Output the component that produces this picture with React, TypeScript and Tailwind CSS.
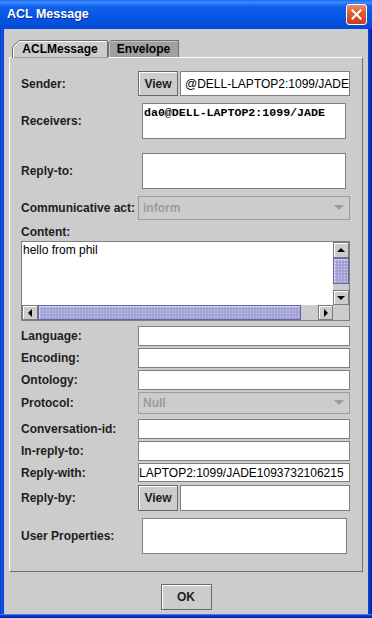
import React from "react";

function Label({ children }: { children: React.ReactNode }) {
  return (
    <div className="w-[117px] shrink-0 text-[12px] leading-[14px] font-bold text-[#1e1e1e] whitespace-nowrap">
      {children}
    </div>
  );
}

function Field({ value = "", className = "" }: { value?: string; className?: string }) {
  return (
    <div
      className={`h-full bg-white border border-[#7f7f7f] text-[12px] leading-[14px] text-black overflow-hidden whitespace-nowrap flex items-center ${className}`}
    >
      {value}
    </div>
  );
}

function ViewButton() {
  return (
    <div className="w-[40px] shrink-0 h-full border border-[#6a6a6a] bg-[#cccccc] shadow-[inset_1px_1px_0_#ffffff] flex items-center justify-center text-[12px] font-bold text-[#1e1e1e]">
      View
    </div>
  );
}

function Combo({ value }: { value: string }) {
  return (
    <div className="w-[212px] h-full border border-[#9c9c9c] bg-[#cccccc] flex items-center justify-between pl-[4px] pr-[5px]">
      <span className="text-[12px] font-bold text-[#9c9c9c]">{value}</span>
      <svg width="10" height="6" viewBox="0 0 10 6">
        <path d="M0 0 L10 0 L5 5 Z" fill="#9c9c9c" />
      </svg>
    </div>
  );
}

function Arrow({ dir }: { dir: "up" | "down" | "left" | "right" }) {
  const d = {
    up: "M4 0 L8 4 L0 4 Z",
    down: "M0 0 L8 0 L4 4 Z",
    left: "M0 4 L4 0 L4 8 Z",
    right: "M0 0 L4 4 L0 8 Z",
  }[dir];
  const vert = dir === "up" || dir === "down";
  return (
    <div className="w-full h-full bg-[#cccccc] border border-[#7a7a7a] shadow-[inset_1px_1px_0_#ffffff] flex items-center justify-center">
      <svg width={vert ? 8 : 4} height={vert ? 4 : 8} viewBox={vert ? "0 0 8 4" : "0 0 4 8"}>
        <path d={d} fill="#000000" />
      </svg>
    </div>
  );
}

const thumb =
  "bg-[#a2a2d4] bg-[radial-gradient(circle,#d6d6ff_0.7px,transparent_0.9px)] bg-[length:3px_3px] border border-[#66669a] shadow-[inset_1px_1px_0_#ccccff]";

export default function App() {
  return (
    <div className="w-[372px] h-[618px] flex flex-col font-['Liberation_Sans',Arial,sans-serif] bg-[#0838c8] overflow-hidden">
      {/* title bar */}
      <div className="h-[29px] shrink-0 flex items-center justify-between pl-[7px] pr-[5px] bg-[linear-gradient(to_bottom,#1a66f0_0%,#3d8cff_8%,#0f60ec_22%,#0556e6_60%,#0549d4_100%)]">
        <span className="text-[12.5px] font-bold text-white [text-shadow:1px_1px_0_#0a2c90]">ACL Message</span>
        <div className="w-[21px] h-[21px] rounded-[3px] border border-white bg-[linear-gradient(to_bottom,#ea8a6a,#dc5a34_45%,#c8401c)] flex items-center justify-center">
          <svg width="11" height="11" viewBox="0 0 11 11">
            <path d="M1.5 1.5 L9.5 9.5 M9.5 1.5 L1.5 9.5" stroke="#ffffff" strokeWidth="2" strokeLinecap="square" />
          </svg>
        </div>
      </div>

      <div className="flex flex-1 min-h-0">
        <div className="w-[4px] shrink-0 bg-[linear-gradient(to_right,#0020b0,#1a5cf0,#0a48e0,#0838c8)]" />

        {/* client area */}
        <div className="w-[364px] bg-[#cccccc] flex flex-col px-[5px]">
          {/* tabs */}
          <div className="pt-[11px] flex pl-[3px] relative z-10">
            <div className="relative w-[96px] h-[18px] -mb-[1px]">
              <svg className="absolute inset-0" width="96" height="18" viewBox="0 0 96 18">
                <path d="M0.5 18 L0.5 7 L7 0.5 L95.5 0.5 L95.5 18 Z" fill="#cccccc" stroke="#6f6f6f" />
                <path d="M1.5 18 L1.5 7.4 L7.4 1.5 L94.5 1.5" fill="none" stroke="#ffffff" />
              </svg>
              <div className="relative h-[17px] flex items-center justify-center text-[12px] font-bold text-black">
                ACLMessage
              </div>
            </div>
            <div className="relative w-[71px] h-[17px]">
              <svg className="absolute inset-0" width="71" height="17" viewBox="0 0 71 17">
                <path d="M0.5 17 L0.5 3 L3 0.5 L70.5 0.5 L70.5 17" fill="#a0a0a0" stroke="#6f6f6f" />
                <path d="M1.5 17 L1.5 3.4 L3.4 1.5 L69.5 1.5" fill="none" stroke="#c4c4c4" />
              </svg>
              <div className="relative h-[17px] flex items-center justify-center text-[12px] font-bold text-black">
                Envelope
              </div>
            </div>
          </div>

          {/* tab panel */}
          <div className="w-[354px] border border-t-white border-l-white border-r-[#6f6f6f] border-b-[#6f6f6f] pt-[13px] pb-[17px] pl-[11px] pr-[12px] flex flex-col">
            <div className="flex items-center h-[25px]">
              <Label>Sender:</Label>
              <div className="flex h-full gap-[2px] w-[212px]">
                <ViewButton />
                <Field value="@DELL-LAPTOP2:1099/JADE" className="w-[170px] pl-[4px]" />
              </div>
            </div>

            <div className="flex items-center h-[36px] mt-[7px]">
              <Label>Receivers:</Label>
              <div className="ml-[4px] w-[204px] h-full bg-white border border-[#7f7f7f] pt-[2px] pl-[1px] font-['Liberation_Mono',monospace] font-bold text-[11.6px] leading-[14px] text-black whitespace-nowrap overflow-hidden">
                da0@DELL-LAPTOP2:1099/JADE
              </div>
            </div>

            <div className="flex items-center h-[36px] mt-[14px]">
              <Label>Reply-to:</Label>
              <div className="ml-[4px] w-[204px] h-full bg-white border border-[#7f7f7f]" />
            </div>

            <div className="flex items-center h-[24px] mt-[7px]">
              <Label>Communicative act:</Label>
              <Combo value="inform" />
            </div>

            <div className="h-[14px] mt-[5px]">
              <Label>Content:</Label>
            </div>

            <div className="mt-[2px] w-[329px] h-[80px] border border-[#7f7f7f] bg-white grid grid-cols-[1fr_16px] grid-rows-[1fr_15px]">
              <div className="pl-[1px] pt-[1px] text-[12px] leading-[14px] text-black">hello from phil</div>
              <div className="flex flex-col bg-[#cccccc]">
                <div className="h-[16px]"><Arrow dir="up" /></div>
                <div className={`h-[26px] ${thumb}`} />
                <div className="flex-1" />
                <div className="h-[15px]"><Arrow dir="down" /></div>
              </div>
              <div className="flex bg-[#cccccc]">
                <div className="w-[16px]"><Arrow dir="left" /></div>
                <div className={`w-[263px] ${thumb}`} />
                <div className="flex-1" />
                <div className="w-[15px]"><Arrow dir="right" /></div>
              </div>
              <div className="bg-[#cccccc]" />
            </div>

            <div className="flex items-center h-[20px] mt-[5px]">
              <Label>Language:</Label>
              <Field className="w-[212px]" />
            </div>
            <div className="flex items-center h-[20px] mt-[2px]">
              <Label>Encoding:</Label>
              <Field className="w-[212px]" />
            </div>
            <div className="flex items-center h-[20px] mt-[2px]">
              <Label>Ontology:</Label>
              <Field className="w-[212px]" />
            </div>
            <div className="flex items-center h-[22px] mt-[2px]">
              <Label>Protocol:</Label>
              <Combo value="Null" />
            </div>
            <div className="flex items-center h-[20px] mt-[5px]">
              <Label>Conversation-id:</Label>
              <Field className="w-[212px]" />
            </div>
            <div className="flex items-center h-[20px] mt-[2px]">
              <Label>In-reply-to:</Label>
              <Field className="w-[212px]" />
            </div>
            <div className="flex items-center h-[19px] mt-[2px]">
              <Label>Reply-with:</Label>
              <Field value="LAPTOP2:1099/JADE1093732106215" className="w-[212px] pl-0" />
            </div>
            <div className="flex items-center h-[26px] mt-[3px]">
              <Label>Reply-by:</Label>
              <div className="flex h-full gap-[2px] w-[212px]">
                <ViewButton />
                <Field className="w-[170px]" />
              </div>
            </div>
            <div className="flex items-center h-[36px] mt-[7px]">
              <Label>User Properties:</Label>
              <div className="ml-[4px] w-[205px] h-full bg-white border border-[#7f7f7f]" />
            </div>
          </div>

          {/* buttons */}
          <div className="mt-[12px] h-[26px] flex justify-center">
            <div className="w-[51px] h-full border border-[#6a6a6a] bg-[#cccccc] shadow-[inset_1px_1px_0_#ffffff] flex items-center justify-center text-[12px] font-bold text-[#1e1e1e]">
              OK
            </div>
          </div>
        </div>

        <div className="w-[4px] shrink-0 bg-[linear-gradient(to_right,#0838c8,#0a40d8,#0828b0,#001890)]" />
      </div>

      <div className="h-[4px] shrink-0 bg-[linear-gradient(to_bottom,#6a9af0,#0a40d8,#0830c0,#001890)]" />
    </div>
  );
}
